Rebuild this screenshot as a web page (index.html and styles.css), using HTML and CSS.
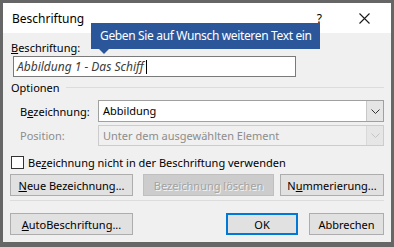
FILE: index.html
```html
<!DOCTYPE html>
<html lang="de">
<head>
    <meta charset="UTF-8">
    <title>Beschriftung</title>
    <link rel="stylesheet" href="styles.css">
</head>
<body>
    <div class="dialog">
        <div class="titlebar">
            <span class="title">Beschriftung</span>
            <span class="help">?</span>
            <svg class="close" width="11" height="11" viewBox="0 0 11 11">
                <path d="M0.5 0.5 L10.5 10.5 M10.5 0.5 L0.5 10.5" stroke="#1a1a1a" stroke-width="1.1" fill="none"/>
            </svg>
        </div>

        <div class="tooltip">Geben Sie auf Wunsch weiteren Text ein</div>

        <div class="content">
            <div class="field-label"><u>B</u>eschriftung:</div>
            <div class="caption-input">
                <span class="caption-text">Abbildung 1 - Das Schiff</span><span class="caret"></span>
            </div>

            <div class="group-head">
                <span>Optionen</span>
                <div class="group-line"></div>
            </div>

            <div class="option-row">
                <span class="option-label">B<u>e</u>zeichnung:</span>
                <div class="select">
                    <span class="select-value">Abbildung</span>
                    <span class="select-btn">
                        <svg width="9" height="5" viewBox="0 0 9 5"><path d="M0.5 0.5 L4.5 4.5 L8.5 0.5" stroke="#333" fill="none"/></svg>
                    </span>
                </div>
            </div>

            <div class="option-row disabled">
                <span class="option-label">Position:</span>
                <div class="select">
                    <span class="select-value">Unter dem ausgewählten Element</span>
                    <span class="select-btn">
                        <svg width="9" height="5" viewBox="0 0 9 5"><path d="M0.5 0.5 L4.5 4.5 L8.5 0.5" stroke="#c4c4c4" fill="none"/></svg>
                    </span>
                </div>
            </div>

            <div class="check-row">
                <span class="checkbox"></span>
                <span>Be<u>z</u>eichnung nicht in der Beschriftung verwenden</span>
            </div>

            <div class="btn-row">
                <button class="btn btn-neue"><u>N</u>eue Bezeichnung...</button>
                <button class="btn btn-del" disabled>Bezeichnung löschen</button>
                <button class="btn btn-num">N<u>u</u>mmerierung...</button>
            </div>

            <div class="separator"></div>

            <div class="btn-row bottom">
                <button class="btn btn-auto"><u>A</u>utoBeschriftung...</button>
                <button class="btn btn-ok">OK</button>
                <button class="btn btn-cancel">Abbrechen</button>
            </div>
        </div>
    </div>
</body>
</html>
```

FILE: styles.css
```css
* {
    margin: 0;
    padding: 0;
    box-sizing: border-box;
}

body {
    background: #666666;
    font-family: "Noto Sans", "Open Sans", sans-serif;
    font-size: 11px;
    color: #000;
    width: 394px;
    height: 247px;
    overflow: hidden;
}

.dialog {
    position: relative;
    margin: 3px 0 0 3px;
    width: 388px;
    height: 239px;
    background: #f0f0f0;
}

/* title bar */
.titlebar {
    height: 30px;
    background: #fff;
    display: flex;
    align-items: center;
    padding-left: 9px;
}

.title {
    font-size: 12px;
    flex: 1;
}

.help {
    font-size: 12px;
    margin-right: 37px;
}

.close {
    margin-right: 21px;
}

/* tooltip over the title bar */
.tooltip {
    position: absolute;
    left: 88px;
    top: 20px;
    width: 229px;
    height: 26px;
    background: #2b579a;
    color: #fff;
    font-size: 12px;
    letter-spacing: -0.35px;
    line-height: 26px;
    padding-left: 9px;
    white-space: nowrap;
    z-index: 2;
}

.tooltip::after {
    content: "";
    position: absolute;
    left: 8px;
    top: 26px;
    border-left: 5px solid transparent;
    border-right: 5px solid transparent;
    border-top: 5px solid #2b579a;
}

/* content */
.content {
    padding: 0 7px 0 7px;
}

.field-label {
    margin: 7px 0 0 1px;
    line-height: 15px;
}

.caption-input {
    margin: 1px 0 0 3px;
    width: 283px;
    height: 21px;
    background: #fff;
    border: 1px solid #7a7a7a;
    display: flex;
    align-items: center;
    padding-left: 3px;
}

.caption-text {
    font-size: 12px;
    font-style: italic;
    color: #3b3b3b;
    white-space: nowrap;
}

.caret {
    width: 1px;
    height: 14px;
    background: #000;
    margin-left: 2px;
}

.group-head {
    margin: 3px 0 0 1px;
    height: 15px;
    display: flex;
    align-items: center;
}

.group-line {
    flex: 1;
    height: 1px;
    background: #dcdcdc;
    margin-left: 6px;
}

.option-row {
    margin-top: 5px;
    display: flex;
    align-items: center;
}

.option-row.disabled {
    margin-top: 3px;
}

.option-label {
    width: 88px;
    padding-left: 10px;
}

.select {
    flex: 1;
    height: 22px;
    background: #fff;
    border: 1px solid #a0a0a0;
    display: flex;
    align-items: stretch;
}

.select-value {
    flex: 1;
    padding-left: 4px;
    line-height: 20px;
}

.select-btn {
    width: 17px;
    background: #e5e5e5;
    border-left: 1px solid #c8c8c8;
    display: flex;
    align-items: center;
    justify-content: center;
}

.disabled .option-label,
.disabled .select-value {
    color: #8d8d8d;
}

.disabled .select {
    height: 21px;
    background: #f0f0f0;
    border-color: #cccccc;
}

.disabled .select-btn {
    background: #e6e6e6;
    border-left-color: #d9d9d9;
}

.check-row {
    margin: 9px 0 0 1px;
    height: 15px;
    display: flex;
    align-items: center;
}

.checkbox {
    width: 13px;
    height: 13px;
    background: #fff;
    border: 1px solid #333;
    margin-right: 4px;
}

/* buttons */
.btn-row {
    margin-top: 4px;
    display: flex;
}

.btn-row.bottom {
    margin-top: 12px;
}

.btn {
    height: 22px;
    font-family: inherit;
    font-size: 11px;
    color: #000;
    background: #e1e1e1;
    border: 1px solid #adadad;
}

.btn-neue,
.btn-auto {
    width: 123px;
}

.btn-del {
    width: 131px;
    margin-left: 10px;
    background: #cccccc;
    border-color: #bfbfbf;
    color: #a3a3a3;
    text-shadow: 1px 1px 0 #f4f4f4;
}

.btn-num {
    width: 104px;
    margin-left: 6px;
}

.btn-ok {
    width: 72px;
    margin-left: auto;
    border: 2px solid #0078d7;
}

.btn-cancel {
    width: 75px;
    margin-left: 11px;
}

.separator {
    margin-top: 4px;
    height: 1px;
    background: #dcdcdc;
}
```
